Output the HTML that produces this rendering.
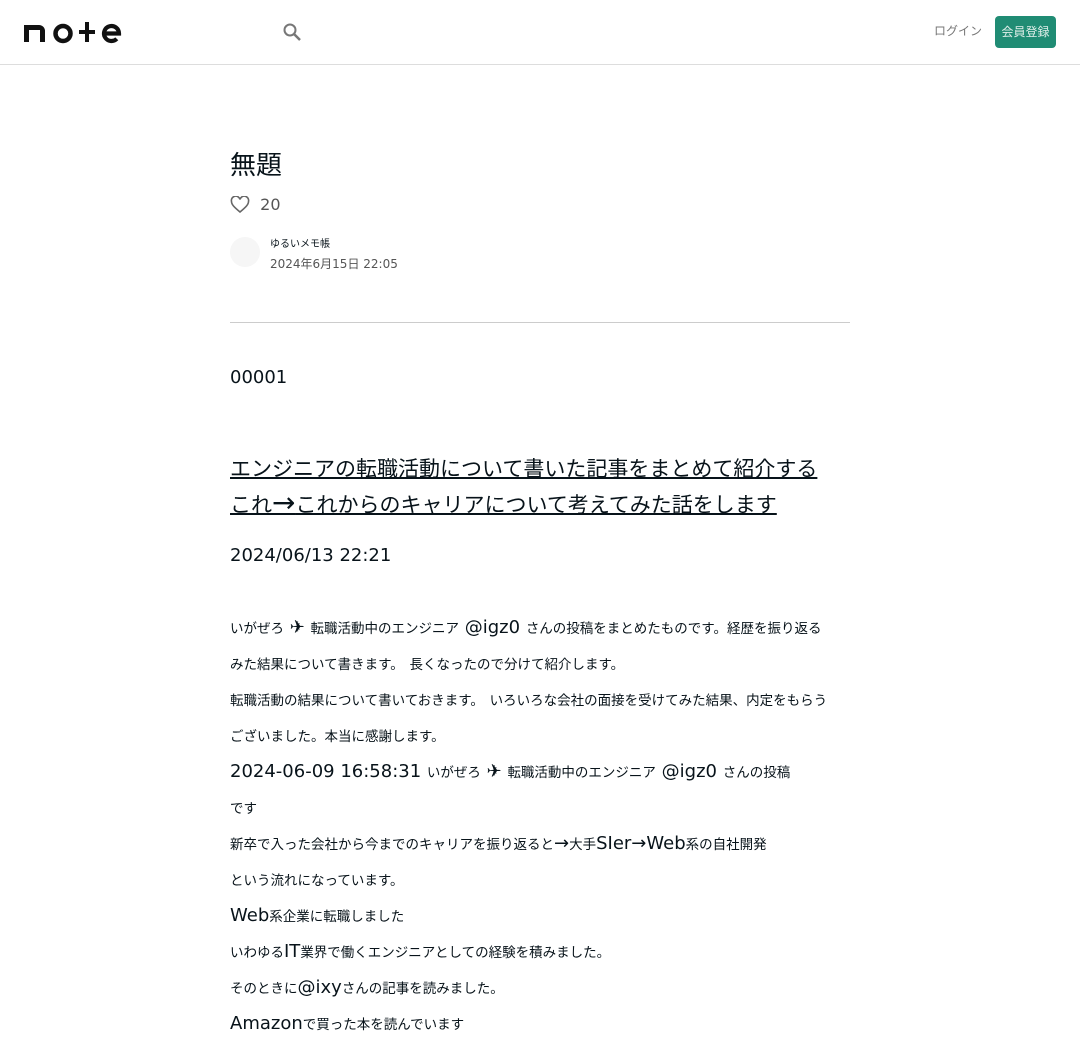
<!DOCTYPE html>
<html><head><meta charset="utf-8"><style>
body{margin:0;background:#fff;font-family:"DejaVu Sans","Noto Sans CJK JP",sans-serif;color:#08131a}
.j{font-family:"Noto Sans CJK JP",sans-serif;font-size:0.75em;line-height:1}
header{height:64px;border-bottom:1px solid #ddd;position:relative}
.logo{position:absolute;left:24px;top:18px}
.srch{position:absolute;left:282px;top:22px}
.login{position:absolute;left:934px;top:24px;font-size:13px;color:#777}
.btn{position:absolute;left:995px;top:16px;width:61px;height:32px;background:#208c74;border-radius:4px;color:#dfeee9;font-size:13px;text-align:center;line-height:32px}
.main{position:absolute;left:230px;width:620px;top:65px}
h1{font-size:32px;font-weight:normal;margin:0;position:absolute;top:78px;line-height:40px}
.like{position:absolute;top:130px;left:0;color:#555;font-size:16px}
.auth{position:absolute;top:172px;left:0}
.av{width:30px;height:30px;border-radius:50%;background:#f6f6f6;position:absolute;left:0;top:0}
.an{position:absolute;left:40px;top:0;font-size:11px;white-space:nowrap}
.ad{position:absolute;left:40px;top:18px;font-size:12px;color:#555;white-space:nowrap}
hr{position:absolute;top:257px;left:0;width:620px;border:0;border-top:1px solid #ccc;margin:0}
.body{position:absolute;top:295px;left:0;width:620px;font-size:18px;line-height:36px}
.l{white-space:nowrap;height:36px;overflow:hidden;width:620px}
h2{font-size:28px;font-weight:normal;line-height:36px;margin:0;text-decoration:underline;text-decoration-thickness:2px}
h2 div{white-space:nowrap;height:36px;overflow:hidden}
</style></head><body>
<header>
<svg class="logo" width="98" height="26" viewBox="0 0 98 26"><g fill="#111"><path d="M0 7h15a6 6 0 0 1 6 6v11h-5V12h-11v12H0z"/><circle cx="39" cy="15.5" r="7.5" fill="none" stroke="#111" stroke-width="4.5"/><rect x="55" y="12" width="16" height="4"/><rect x="61" y="4" width="4" height="20"/><path d="M80 15.5h15a7.5 7.5 0 1 0 -2.2 5.3" fill="none" stroke="#111" stroke-width="4.2"/></g></svg>
<svg class="srch" width="20" height="20" viewBox="0 0 20 20"><circle cx="8" cy="8" r="5.5" fill="none" stroke="#777" stroke-width="2"/><path d="M12 12l6 6" stroke="#777" stroke-width="2.5"/></svg>
<div class="login"><span class="j" style="font-size:12px">ログイン</span></div>
<div class="btn"><span style="font-size:12px;font-family:'Noto Sans CJK JP',sans-serif">会員登録</span></div>
</header>
<div class="main">
<h1><span class="j" style="font-size:26px">無題</span></h1>
<div class="like"><svg width="20" height="18" viewBox="0 0 20 18" style="vertical-align:-4px"><path d="M10 16C4 11 1.5 8.5 1.5 5.5A4 4 0 0 1 10 3.5a4 4 0 0 1 8.5 2C18.5 8.5 16 11 10 16z" fill="none" stroke="#666" stroke-width="1.6"/></svg>&nbsp;&nbsp;20</div>
<div class="auth"><div class="av"></div><div class="an"><span class="j" style="font-size:10px">ゆるいメモ帳</span></div><div class="ad">2024年6月15日 22:05</div></div>
<hr>
<div class="body">
<div style="margin-bottom:53px">00001</div>
<h2><div><span class="j" style="font-size:21px">エンジニアの転職活動について書いた記事をまとめて紹介する</span></div><div><span class="j" style="font-size:21px">これ</span>→<span class="j" style="font-size:21px">これからのキャリアについて考えてみた話をします</span></div></h2>
<div style="margin-top:17px">2024/06/13 22:21</div>
<div style="margin-top:36px">
<div class="l"><span class="j">いがぜろ</span> ✈ <span class="j">転職活動中のエンジニア</span> @igz0 <span class="j">さんの投稿をまとめたものです。経歴を振り返る</span></div>
<div class="l"><span class="j">みた結果について書きます。</span> <span class="j">長くなったので分けて紹介します。</span></div>
<div class="l"><span class="j">転職活動の結果について書いておきます。</span> <span class="j">いろいろな会社の面接を受けてみた結果、内定をもらう</span></div>
<div class="l"><span class="j">ございました。本当に感謝します。</span></div>
<div class="l">2024-06-09 16:58:31 <span class="j">いがぜろ</span> ✈ <span class="j">転職活動中のエンジニア</span> @igz0 <span class="j">さんの投稿</span></div>
<div class="l"><span class="j">です</span></div>
<div class="l"><span class="j">新卒で入った会社から今までのキャリアを振り返ると</span>→<span class="j">大手</span>SIer→Web<span class="j">系の自社開発</span></div>
<div class="l"><span class="j">という流れになっています。</span></div>
<div class="l">Web<span class="j">系企業に転職しました</span></div>
<div class="l"><span class="j">いわゆる</span>IT<span class="j">業界で働くエンジニアとしての経験を積みました。</span></div>
<div class="l"><span class="j">そのときに</span>@ixy<span class="j">さんの記事を読みました。</span></div>
<div class="l">Amazon<span class="j">で買った本を読んでいます</span></div>
</div>
</div>
</div>
</body></html>
